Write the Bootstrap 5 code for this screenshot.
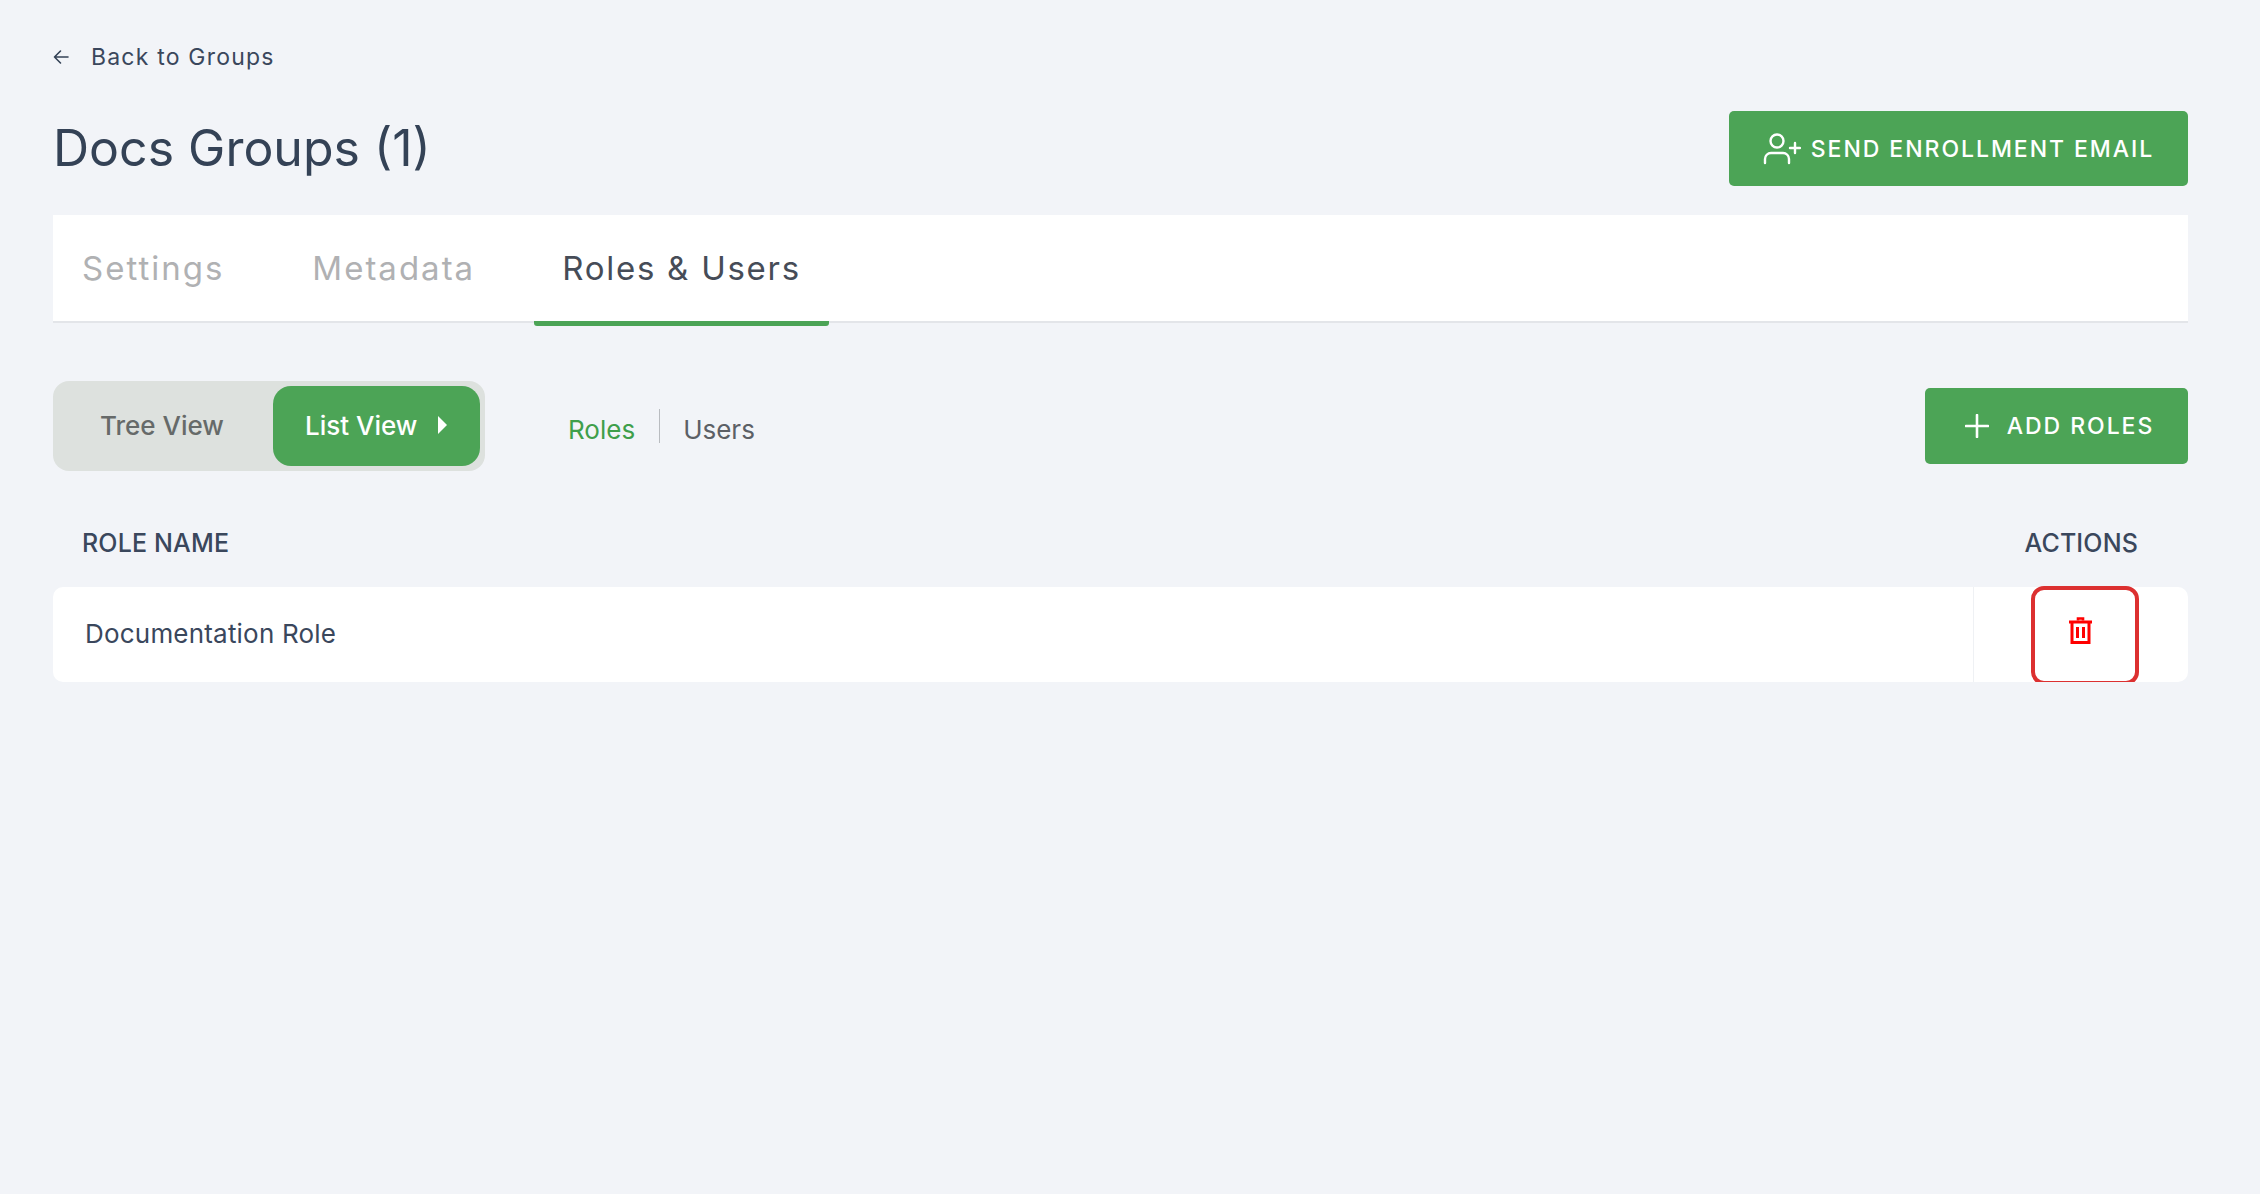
<!DOCTYPE html>
<html lang="en">
<head>
    <meta charset="UTF-8">
    <meta name="viewport" content="width=device-width, initial-scale=1.0">
    <title>Docs Groups</title>
    <link href="https://cdn.jsdelivr.net/npm/bootstrap@5.3.0/dist/css/bootstrap.min.css" rel="stylesheet">
    <style>
        body { background: #f2f4f8; color: #3a475c; font-family: Inter, "Liberation Sans", sans-serif; }
        .page-wrap { padding: 41px 72px 0 53px; }
        .back-link { color: #3a475c; font-size: 23px; line-height: 32px; letter-spacing: 1.2px; text-decoration: none; gap: 22px; }
        .page-head { margin-top: 38px; height: 75px; }
        .page-title { font-size: 50px; font-weight: 400; line-height: 75px; margin: 0; color: #344256; }
        .btn-green { background: #4ca456; color: #fff; border: 0; border-radius: 5px; font-weight: 500; letter-spacing: 1.95px; font-size: 23px; }
        .btn-green:hover { background: #4ca456; color: #fff; }
        .btn-enroll { width: 459px; height: 75px; gap: 10px; }
        .btn-enroll span { padding-top: 1px; }
        .btn-add { width: 263px; height: 76px; gap: 18px; padding-left: 6px !important; }
        .tab-strip { margin-top: 29px; height: 108px; padding-left: 1px; background: #fff; border-bottom: 2px solid #e3e5e9; gap: 32px; }
        .tab-item { padding: 0 28px; font-size: 33px; line-height: 107px; letter-spacing: 2px; color: #b0b1b3; text-decoration: none; height: 111px; border-radius: 3px; }
        .tab-item.is-active { color: #464c57; border-bottom: 5px solid #4ca456; letter-spacing: 1.75px; margin-left: -1px; }
        .tool-row { margin-top: 58px; height: 90px; }
        .view-toggle { width: 432px; height: 90px; background: #dde1de; border-radius: 16px; padding: 5px; }
        .toggle-off { width: 215px; color: #666a69; font-size: 26px; font-weight: 500; padding: 0 0 2px 42px; }
        .toggle-on { width: 207px; background: #4ca456; color: #fff; font-size: 26px; font-weight: 500; border-radius: 18px; padding: 0 0 2px 32px; gap: 21px; }
        .sub-links { margin-left: 83px; margin-top: 28px; font-size: 26px; }
        .sub-links span { height: 34px; line-height: 42px; }
        .sub-links .on { color: #3f9f4b; padding-right: 24px; }
        .sub-links .off { color: #5c6066; padding-left: 23px; border-left: 1px solid #b9bcc0; }
        .head-row { margin-top: 52px; height: 40px; font-size: 25px; font-weight: 500; line-height: 40px; letter-spacing: .15px; padding: 0 50px 0 29px; }
        .role-row { margin-top: 24px; height: 95px; background: #fff; border-radius: 10px; font-size: 26px; letter-spacing: .2px; }
        .role-name { padding: 0 0 2px 32px; }
        .role-action { width: 215px; border-left: 1px solid #eff1f4; padding-left: 95px; padding-top: 30px; }
        .red-frame { position: absolute; top: -1px; right: 49px; width: 108px; height: 99px; border: 4px solid #dc3030; border-radius: 13px; }
    </style>
</head>
<body>
    <div class="page-wrap">
        <a href="#" class="back-link d-flex align-items-center">
            <svg width="16" height="16" viewBox="0 0 16 16" fill="none" stroke="#344256" stroke-width="1.6" stroke-linecap="round" stroke-linejoin="round"><path d="M15 8H1.500M7.500 2 1.500 8l6 6"/></svg>
            <span>Back to Groups</span>
        </a>

        <div class="page-head d-flex justify-content-between align-items-center">
            <h1 class="page-title">Docs Groups (1)</h1>
            <button type="button" class="btn btn-green btn-enroll d-flex align-items-center justify-content-center p-0">
                <svg width="38" height="32" viewBox="0 0 38 32" fill="none" stroke="#fff" stroke-width="2.4" stroke-linecap="round"><circle cx="14" cy="8" r="6.5"/><path d="M2 30v-4a6 6 0 0 1 6-6h12a6 6 0 0 1 6 6v4M27 15h10M32 10v10"/></svg>
                <span>SEND ENROLLMENT EMAIL</span>
            </button>
        </div>

        <div class="tab-strip d-flex">
            <a href="#" class="tab-item">Settings</a>
            <a href="#" class="tab-item">Metadata</a>
            <a href="#" class="tab-item is-active">Roles &amp; Users</a>
        </div>

        <div class="tool-row d-flex justify-content-between align-items-center">
            <div class="d-flex align-items-start">
                <div class="view-toggle d-flex">
                    <div class="toggle-off d-flex align-items-center">Tree View</div>
                    <div class="toggle-on d-flex align-items-center">
                        <span>List View</span>
                        <svg width="9" height="18" viewBox="0 0 9 18"><path d="M0 0l9 9-9 9z" fill="#fff"/></svg>
                    </div>
                </div>
                <div class="sub-links d-flex">
                    <span class="on">Roles</span>
                    <span class="off">Users</span>
                </div>
            </div>
            <button type="button" class="btn btn-green btn-add d-flex align-items-center justify-content-center p-0">
                <svg width="24" height="24" viewBox="0 0 24 24" fill="none" stroke="#fff" stroke-width="2.6" stroke-linecap="round"><path d="M12 1v22M1 12h22"/></svg>
                <span>ADD ROLES</span>
            </button>
        </div>

        <div class="head-row d-flex justify-content-between">
            <span>ROLE NAME</span>
            <span>ACTIONS</span>
        </div>

        <div class="role-row d-flex position-relative">
            <div class="role-name flex-grow-1 d-flex align-items-center">Documentation Role</div>
            <div class="role-action">
                <svg class="d-block" width="23" height="28" viewBox="0 0 23 28" fill="none" stroke="#f00" stroke-width="3"><path d="M0 5h23M3 5v20.500h17V5M8.500 10v11M14.500 10v11"/><path d="M9 3.500V1.500h5v2" stroke-width="2.600"/></svg>
            </div>
            <div class="red-frame"></div>
        </div>
    </div>
</body>
</html>
